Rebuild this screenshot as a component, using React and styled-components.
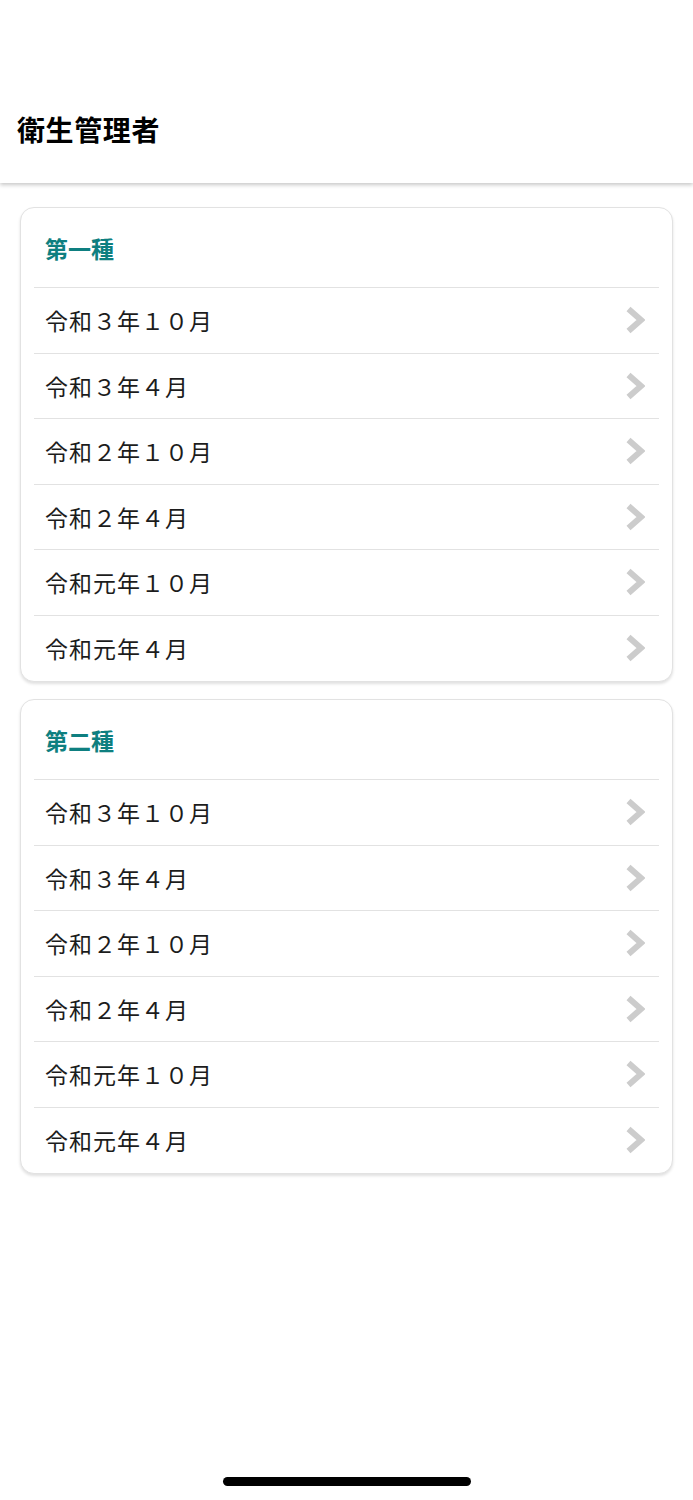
import styled, { createGlobalStyle } from "styled-components";

const GlobalStyle = createGlobalStyle`
  * { box-sizing: border-box; }
  body {
    margin: 0;
    background: #ffffff;
    font-family: "Noto Sans CJK JP", "Noto Sans", sans-serif;
    color: #1c1c1c;
  }
`;

const sections = [
  {
    title: "第一種",
    items: ["令和３年１０月", "令和３年４月", "令和２年１０月", "令和２年４月", "令和元年１０月", "令和元年４月"],
  },
  {
    title: "第二種",
    items: ["令和３年１０月", "令和３年４月", "令和２年１０月", "令和２年４月", "令和元年１０月", "令和元年４月"],
  },
];

function Chevron() {
  return (
    <ChevronIcon viewBox="0 0 20 28" width="20" height="28">
      <path d="M3.5 3 L16 14 L3.5 25" fill="none" stroke="#cccccc" strokeWidth="6" />
    </ChevronIcon>
  );
}

export default function App() {
  return (
    <>
      <GlobalStyle />
      <Page>
        <Header>
          <Title>衛生管理者</Title>
        </Header>
        <Content>
          {sections.map((s) => (
            <Card key={s.title}>
              <CardTitle>{s.title}</CardTitle>
              <List>
                {s.items.map((item) => (
                  <Row key={item}>
                    <RowText>{item}</RowText>
                    <Chevron />
                  </Row>
                ))}
              </List>
            </Card>
          ))}
        </Content>
        <HomeBar />
      </Page>
    </>
  );
}

const Page = styled.div`
  width: 693px;
  height: 1500px;
  display: flex;
  flex-direction: column;
  background: #ffffff;
`;

const Header = styled.header`
  height: 183px;
  padding: 0 17px 34px;
  display: flex;
  align-items: flex-end;
  background: #ffffff;
  box-shadow: 0 2px 4px rgba(0, 0, 0, 0.22);
  position: relative;
  z-index: 1;
`;

const Title = styled.h1`
  margin: 0;
  font-size: 28px;
  font-weight: 700;
  letter-spacing: 0.6px;
  line-height: 40px;
  color: #000000;
`;

const Content = styled.main`
  flex: 1;
  padding: 24px 20px 0;
  display: flex;
  flex-direction: column;
  gap: 17px;
`;

const Card = styled.section`
  border: 1px solid #e2e2e2;
  border-radius: 14px;
  background: #ffffff;
  box-shadow: 0 2px 3px rgba(0, 0, 0, 0.12);
  padding: 0 13px;
`;

const CardTitle = styled.h2`
  margin: 0;
  height: 80px;
  padding: 0 11px;
  display: flex;
  align-items: center;
  font-size: 23px;
  font-weight: 700;
  color: #0e7f80;
  border-bottom: 1px solid #e2e2e2;
`;

const List = styled.ul`
  list-style: none;
  margin: 0;
  padding: 0;
`;

const Row = styled.li`
  height: 65.5px;
  padding: 0 14px 0 11px;
  display: flex;
  align-items: center;
  justify-content: space-between;
  border-bottom: 1px solid #e2e2e2;
  &:last-child {
    border-bottom: none;
  }
`;

const RowText = styled.span`
  font-size: 23px;
  font-weight: 400;
  letter-spacing: 1px;
  color: #1c1c1c;
`;

const ChevronIcon = styled.svg`
  flex-shrink: 0;
  display: block;
`;

const HomeBar = styled.div`
  width: 248px;
  height: 9px;
  border-radius: 5px;
  background: #000000;
  align-self: center;
  margin-bottom: 14px;
`;
